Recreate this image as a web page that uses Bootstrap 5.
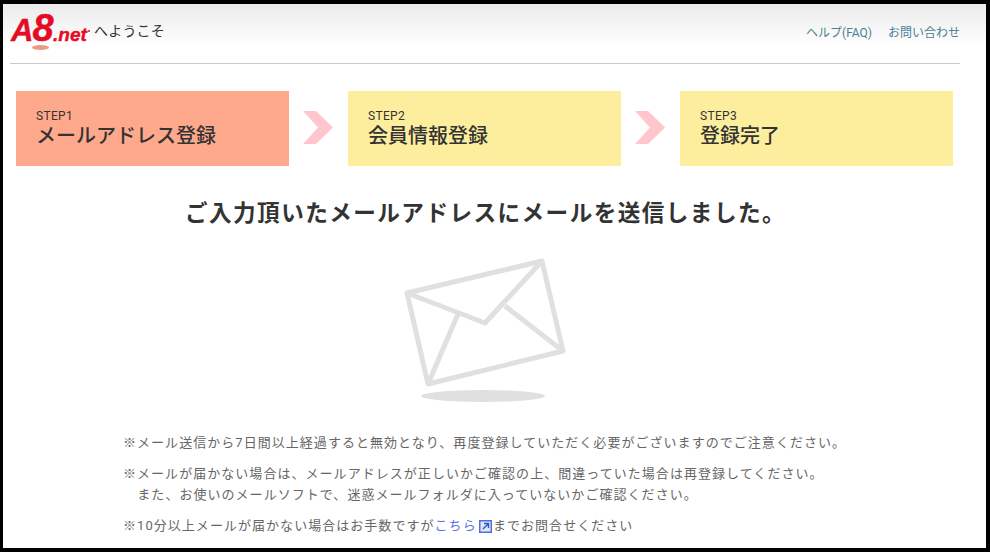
<!DOCTYPE html>
<html lang="ja">

<head>
    <meta charset="UTF-8">
    <meta name="viewport" content="width=device-width, initial-scale=1.0">
    <title>メールアドレス登録 - A8.net</title>
    <link href="https://cdn.jsdelivr.net/npm/bootstrap@5.3.0/dist/css/bootstrap.min.css" rel="stylesheet">
    <style>
        html, body {
            height: 552px;
            overflow: hidden;
        }

        body {
            background: #000;
            font-family: Roboto, "Noto Sans CJK JP", sans-serif;
            color: #333;
        }

        /* Black frame of the screenshot */
        .shot-frame {
            height: 544px;
            margin: 4px 4px 4px 3px;
            background: #fff;
            overflow: hidden;
        }

        .top-bar {
            height: 60px;
            background: linear-gradient(#ebebeb 0, #fff 42px);
        }

        .top-bar-inner {
            height: 60px;
            margin: 0 26px 0 7px;
            border-bottom: 1px solid #ccc;
        }

        .logo-box {
            position: relative;
            width: 82px;
            height: 46px;
            margin-top: 8px;
            color: #e60b25;
            font-family: "Liberation Sans", sans-serif;
            font-weight: 700;
            font-style: italic;
            white-space: nowrap;
            -webkit-text-stroke: .4px #e60b25;
        }

        .logo-a8 {
            position: absolute;
            left: 1px;
            top: -2px;
            font-size: 31px;
            line-height: 36px;
            letter-spacing: -1px;
        }

        .logo-eight {
            font-size: 38px;
        }

        .logo-net {
            position: absolute;
            left: 43px;
            top: 12px;
            font-size: 19px;
            line-height: 22px;
        }

        .logo-dot {
            position: absolute;
            left: 78px;
            top: 18px;
            width: 2px;
            height: 2px;
            border-radius: 50%;
            background: #e60b25;
        }

        .logo-shadow {
            position: absolute;
            left: 22px;
            top: 33px;
            width: 17px;
            height: 5px;
            border-radius: 50%;
            background: #eb9b85;
        }

        .welcome-text {
            font-size: 14px;
            letter-spacing: .2px;
            margin-left: -2px;
            color: #333;
        }

        .help-link {
            font-size: 12px;
            color: #4b7f92;
            text-decoration: none;
        }

        .step-row {
            margin: 27px 33px 0 13px;
        }

        .step-box {
            width: 273px;
            height: 75px;
            padding: 18px 20px 0;
            background: #fdee9e;
        }

        .step-box.is-current {
            background: #ffa98c;
        }

        .step-num {
            font-size: 12px;
            line-height: 14px;
            letter-spacing: .3px;
        }

        .step-name {
            font-size: 20px;
            line-height: 26px;
            font-weight: 500;
        }

        .step-arrow {
            width: 59px;
            padding: 0 0 2px 14px;
        }

        .sent-title {
            margin: 31px 0 0 -18px;
            font-size: 22.6px;
            line-height: 34px;
            font-weight: 700;
            letter-spacing: 1.45px;
            text-align: center;
            color: #333;
        }

        .mail-pic {
            display: block;
            margin: 25px 0 0 398px;
        }

        .note-list {
            margin: 26px 0 0 120px;
            font-size: 13px;
            line-height: 21px;
            color: #666;
            letter-spacing: 1.04px;
        }

        .note-list p {
            margin: 0 0 10px;
            white-space: nowrap;
        }

        .note-link {
            color: #5f74e6;
            text-decoration: none;
        }

        .note-icon {
            margin: 0 1px 0 -2px;
        }
    </style>
</head>

<body>
    <div class="shot-frame">
        <!-- Header -->
        <div class="top-bar">
            <div class="top-bar-inner d-flex justify-content-between align-items-start">
                <div class="d-flex align-items-center gap-1">
                    <div class="logo-box">
                        <span class="logo-a8">A<span class="logo-eight">8</span></span>
                        <span class="logo-net">.net</span>
                        <span class="logo-dot"></span>
                        <span class="logo-shadow"></span>
                    </div>
                    <span class="welcome-text">へようこそ</span>
                </div>
                <div class="d-flex gap-3 pt-3 mt-1">
                    <a class="help-link" href="#">ヘルプ(FAQ)</a>
                    <a class="help-link" href="#">お問い合わせ</a>
                </div>
            </div>
        </div>

        <!-- Steps -->
        <div class="step-row d-flex">
            <div class="step-box is-current">
                <div class="step-num">STEP1</div>
                <div class="step-name">メールアドレス登録</div>
            </div>
            <div class="step-arrow d-flex align-items-center">
                <svg width="30" height="33" viewBox="0 0 30 33"><path d="M0 0H13L30 16.500 13 33H0L15 16.500Z" fill="#ffc6cd"/></svg>
            </div>
            <div class="step-box">
                <div class="step-num">STEP2</div>
                <div class="step-name">会員情報登録</div>
            </div>
            <div class="step-arrow d-flex align-items-center">
                <svg width="30" height="33" viewBox="0 0 30 33"><path d="M0 0H13L30 16.500 13 33H0L15 16.500Z" fill="#ffc6cd"/></svg>
            </div>
            <div class="step-box">
                <div class="step-num">STEP3</div>
                <div class="step-name">登録完了</div>
            </div>
        </div>

        <h1 class="sent-title">ご入力頂いたメールアドレスにメールを送信しました。</h1>

        <!-- Envelope -->
        <svg class="mail-pic" width="170" height="150" viewBox="0 0 170 150">
            <g fill="none" stroke="#e0e0e0" stroke-width="5" stroke-linejoin="round">
                <path d="M6 37 141 5 162 95 27 128Z"/>
                <path d="M6 37 84 67 141 5"/>
                <path d="M57 58 27 128"/>
                <path d="M104 50 162 95"/>
            </g>
            <ellipse cx="82" cy="140" rx="62" ry="6" fill="#e0e0e0"/>
        </svg>

        <!-- Notes -->
        <div class="note-list">
            <p>※メール送信から7日間以上経過すると無効となり、再度登録していただく必要がございますのでご注意ください。</p>
            <p>※メールが届かない場合は、メールアドレスが正しいかご確認の上、間違っていた場合は再登録してください。<br>&emsp;また、お使いのメールソフトで、迷惑メールフォルダに入っていないかご確認ください。</p>
            <p>※10分以上メールが届かない場合はお手数ですが<a class="note-link" href="#">こちら
                <svg class="note-icon" width="13" height="13" viewBox="0 0 13 13"><rect x=".75" y=".75" width="11.500" height="11.500" fill="#dfe6fb" stroke="#4a72d8" stroke-width="1.500"/><path d="M4 9 9 4M5 3.500H9.500V8" fill="none" stroke="#2f56b8" stroke-width="1.400"/></svg></a>までお問合せください</p>
        </div>
    </div>

    <script src="https://cdn.jsdelivr.net/npm/bootstrap@5.3.0/dist/js/bootstrap.bundle.min.js"></script>
</body>

</html>
